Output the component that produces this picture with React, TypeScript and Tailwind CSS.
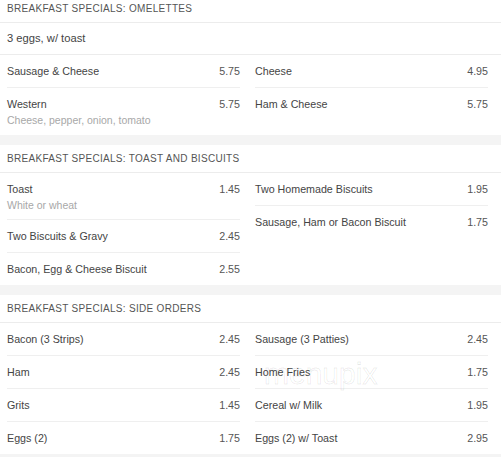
import React from "react";

type Item = { name: string; price: string; desc?: string };
type Section = { title: string; intro?: string; left: Item[]; right: Item[] };

const sections: Section[] = [
  {
    title: "BREAKFAST SPECIALS: OMELETTES",
    intro: "3 eggs, w/ toast",
    left: [
      { name: "Sausage & Cheese", price: "5.75" },
      { name: "Western", price: "5.75", desc: "Cheese, pepper, onion, tomato" },
    ],
    right: [
      { name: "Cheese", price: "4.95" },
      { name: "Ham & Cheese", price: "5.75" },
    ],
  },
  {
    title: "BREAKFAST SPECIALS: TOAST AND BISCUITS",
    left: [
      { name: "Toast", price: "1.45", desc: "White or wheat" },
      { name: "Two Biscuits & Gravy", price: "2.45" },
      { name: "Bacon, Egg & Cheese Biscuit", price: "2.55" },
    ],
    right: [
      { name: "Two Homemade Biscuits", price: "1.95" },
      { name: "Sausage, Ham or Bacon Biscuit", price: "1.75" },
    ],
  },
  {
    title: "BREAKFAST SPECIALS: SIDE ORDERS",
    left: [
      { name: "Bacon (3 Strips)", price: "2.45" },
      { name: "Ham", price: "2.45" },
      { name: "Grits", price: "1.45" },
      { name: "Eggs (2)", price: "1.75" },
    ],
    right: [
      { name: "Sausage (3 Patties)", price: "2.45" },
      { name: "Home Fries", price: "1.75" },
      { name: "Cereal w/ Milk", price: "1.95" },
      { name: "Eggs (2) w/ Toast", price: "2.95" },
    ],
  },
];

function Row({ item, last }: { item: Item; last: boolean }) {
  const h = item.desc ? "h-[47px]" : last ? "h-[32px]" : "h-[33px]";
  return (
    <div className={`${h} pt-[10px] ${last ? "" : "border-b border-[#efefef]"}`}>
      <div className="flex justify-between items-start leading-[13px]">
        <span className="text-[10.7px] text-[#444]">{item.name}</span>
        <span className="text-[10.7px] text-[#555]">{item.price}</span>
      </div>
      {item.desc && (
        <div className="mt-[3px] text-[10.5px] leading-[13px] text-[#a8a8a8]">{item.desc}</div>
      )}
    </div>
  );
}

function Column({ items }: { items: Item[] }) {
  return (
    <div className="w-[233px] flex flex-col">
      {items.map((it, i) => (
        <Row key={i} item={it} last={i === items.length - 1} />
      ))}
    </div>
  );
}

export default function App() {
  return (
    <div className="relative w-[501px] h-[457px] overflow-hidden bg-[#f4f4f4] font-['Liberation_Sans',Arial,sans-serif]">
      <div className="-mt-[5px] flex flex-col gap-[10px]">
        {sections.map((s, i) => (
          <div key={i} className="bg-white">
            <div className="h-[28px] flex items-center pl-[7px] border-b border-[#ececec] text-[10px] tracking-[0.3px] text-[#555]">
              {s.title}
            </div>
            {s.intro && (
              <div className="h-[32px] flex items-center pl-[7px] border-b border-[#ececec] text-[11.2px] text-[#444]">
                {s.intro}
              </div>
            )}
            <div className="flex gap-[15px] pl-[7px]">
              <Column items={s.left} />
              <Column items={s.right} />
            </div>
          </div>
        ))}
      </div>
      <div className="absolute left-[264px] top-[356px] text-[30px] leading-[36px] font-['Liberation_Sans',Arial,sans-serif] text-transparent [-webkit-text-stroke:0.8px_rgba(0,0,0,0.09)] pointer-events-none select-none">
        menupix
      </div>
    </div>
  );
}
